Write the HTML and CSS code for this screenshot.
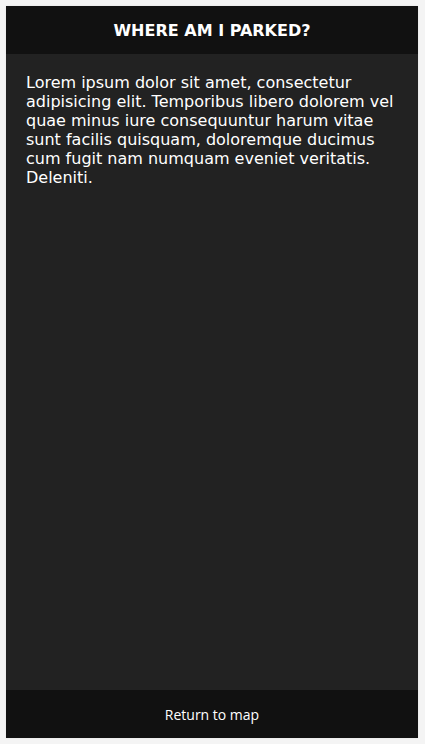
FILE: index.html
```html
<!DOCTYPE html>
<html lang="en">
<head>
<meta charset="utf-8">
<title>Where am I parked?</title>
<link rel="stylesheet" href="styles.css">
</head>
<body>
<div class="app">
  <header class="app-header">WHERE AM I PARKED?</header>
  <main class="app-body">
    <p>Lorem ipsum dolor sit amet, consectetur adipisicing elit. Temporibus libero dolorem vel quae minus iure consequuntur harum vitae sunt facilis quisquam, doloremque ducimus cum fugit nam numquam eveniet veritatis. Deleniti.</p>
  </main>
  <footer class="app-footer">Return to map</footer>
</div>
</body>
</html>
```
FILE: styles.css
```css
html, body {
  margin: 0;
  padding: 0;
  height: 100%;
}
body {
  background: #f4f4f4;
  font-family: "DejaVu Sans", sans-serif;
  padding: 6px 7px 6px 6px;
  box-sizing: border-box;
}
.app {
  height: 100%;
  display: flex;
  flex-direction: column;
  background: #222222;
  color: #ffffff;
  box-shadow: 0 0 2px rgba(0,0,0,0.08);
}
.app-header {
  height: 48px;
  flex: none;
  background: #111111;
  display: flex;
  align-items: center;
  justify-content: center;
  font-weight: bold;
  font-size: 16px;
}
.app-body {
  flex: 1;
  padding: 19px 20px;
}
.app-body p {
  margin: 0;
  font-size: 16px;
  line-height: 19px;
}
.app-footer {
  height: 48px;
  flex: none;
  background: #111111;
  display: flex;
  align-items: center;
  justify-content: center;
  font-family: "Open Sans", sans-serif;
  font-size: 14px;
}
```
